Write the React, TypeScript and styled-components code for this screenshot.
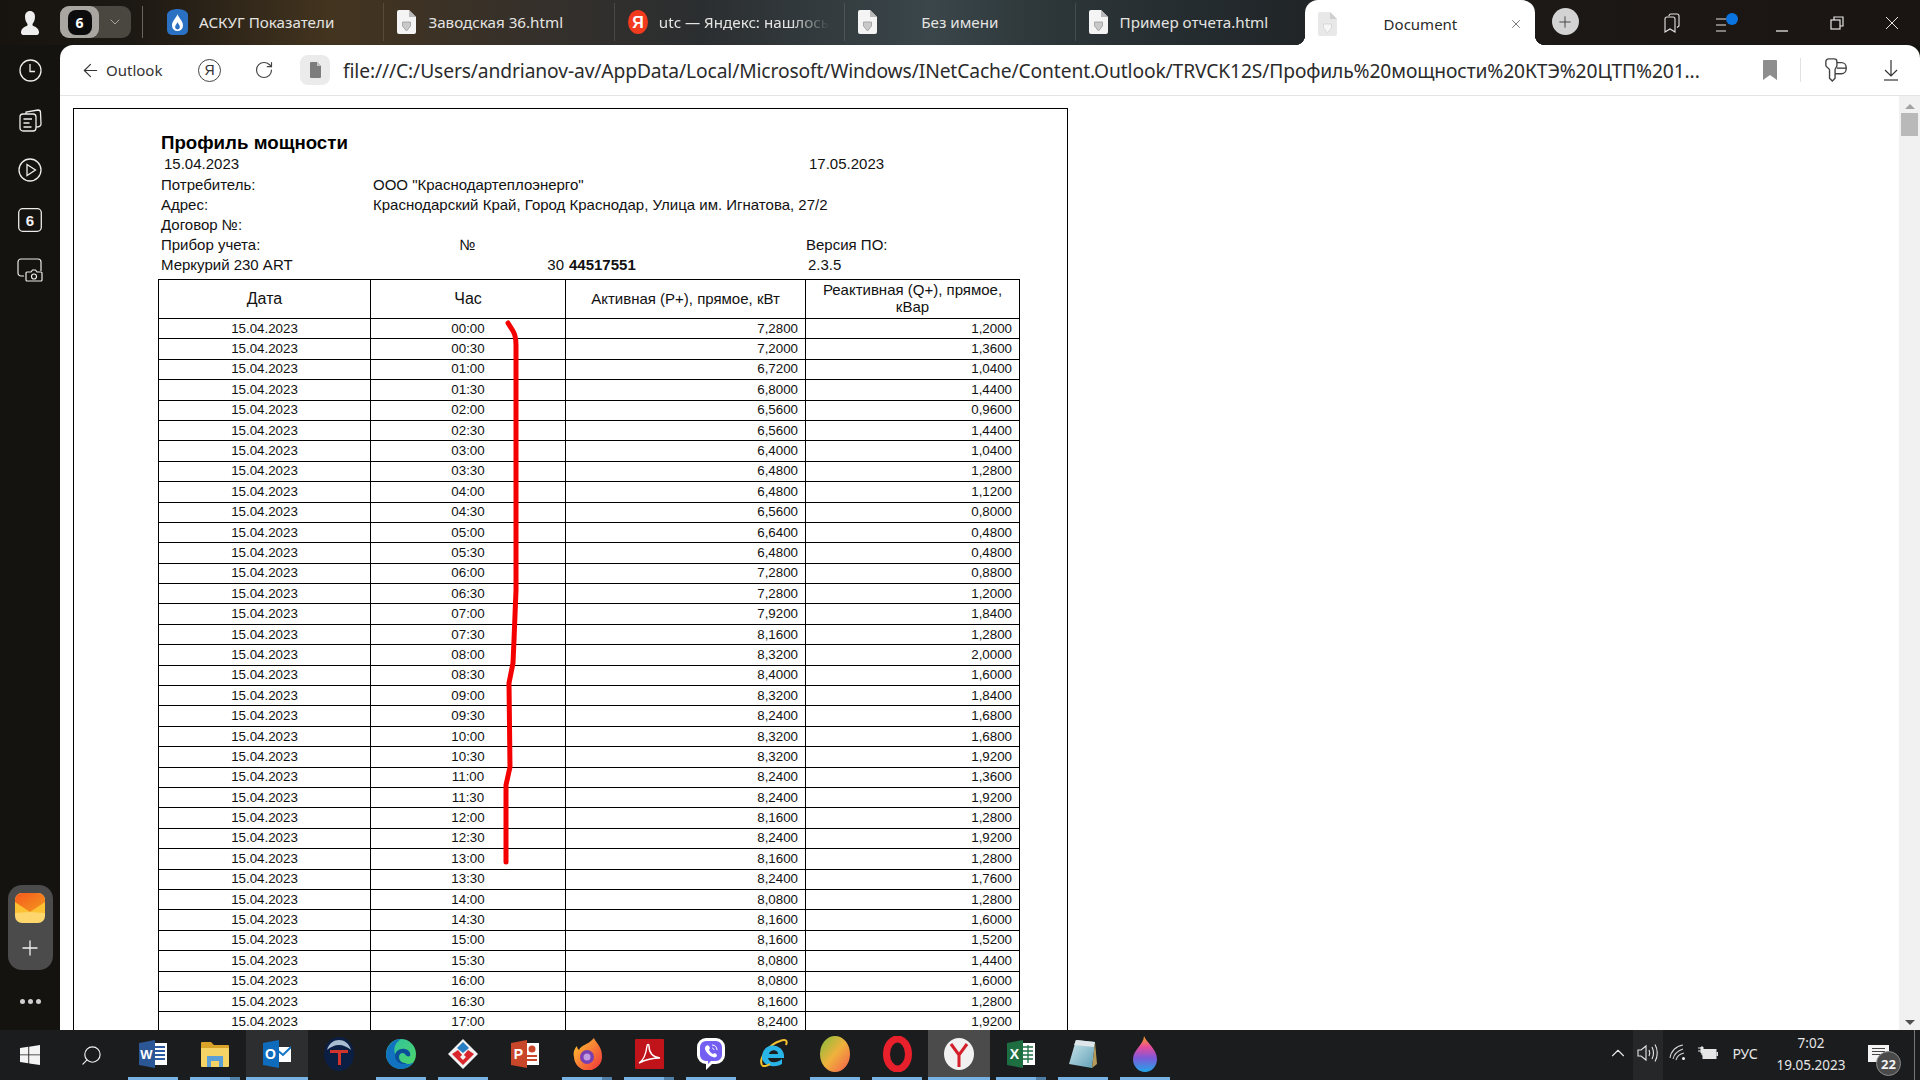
import React from "react";
import styled, { createGlobalStyle } from "styled-components";
import { ArrowLeft, RotateCw, Plus, X, ChevronDown, ChevronUp, Search } from "lucide-react";

const GlobalStyle = createGlobalStyle`
  html, body {
    margin: 0;
    padding: 0;
    overflow: hidden;
    background: #14130f;
  }
  * { box-sizing: border-box; }
`;

const uiFont = `"Noto Sans", "Open Sans", sans-serif`;
const docFont = `"Liberation Sans", Arial, sans-serif`;

const readings = [
  ["00:00", "7,2800", "1,2000"], ["00:30", "7,2000", "1,3600"], ["01:00", "6,7200", "1,0400"],
  ["01:30", "6,8000", "1,4400"], ["02:00", "6,5600", "0,9600"], ["02:30", "6,5600", "1,4400"],
  ["03:00", "6,4000", "1,0400"], ["03:30", "6,4800", "1,2800"], ["04:00", "6,4800", "1,1200"],
  ["04:30", "6,5600", "0,8000"], ["05:00", "6,6400", "0,4800"], ["05:30", "6,4800", "0,4800"],
  ["06:00", "7,2800", "0,8800"], ["06:30", "7,2800", "1,2000"], ["07:00", "7,9200", "1,8400"],
  ["07:30", "8,1600", "1,2800"], ["08:00", "8,3200", "2,0000"], ["08:30", "8,4000", "1,6000"],
  ["09:00", "8,3200", "1,8400"], ["09:30", "8,2400", "1,6800"], ["10:00", "8,3200", "1,6800"],
  ["10:30", "8,3200", "1,9200"], ["11:00", "8,2400", "1,3600"], ["11:30", "8,2400", "1,9200"],
  ["12:00", "8,1600", "1,2800"], ["12:30", "8,2400", "1,9200"], ["13:00", "8,1600", "1,2800"],
  ["13:30", "8,2400", "1,7600"], ["14:00", "8,0800", "1,2800"], ["14:30", "8,1600", "1,6000"],
  ["15:00", "8,1600", "1,5200"], ["15:30", "8,0800", "1,4400"], ["16:00", "8,0800", "1,6000"],
  ["16:30", "8,1600", "1,2800"], ["17:00", "8,2400", "1,9200"],
];

const Screen = styled.div`
  width: 1920px;
  height: 1080px;
  display: flex;
  flex-direction: column;
  overflow: hidden;
  background: #14130f;
`;

/* tab strip */
const TabStrip = styled.div`
  height: 45px;
  flex: none;
  display: flex;
  align-items: stretch;
  background: linear-gradient(90deg, #171410 0, #1c1813 130px, #43341f 330px, #36302a 520px, #2b2e30 700px, #3a464a 930px, #2c3538 1060px, #22282b 1250px, #1c1815 1560px, #1a1512 1920px);
`;

const UserSlot = styled.div`
  width: 60px;
  display: flex;
  align-items: center;
  justify-content: center;
`;

const GroupPill = styled.div`
  width: 71px;
  height: 32px;
  margin-top: 6px;
  display: flex;
  border-radius: 9px;
  background: #4a4741;
  color: #a9a6a0;
`;

const GroupCount = styled.div`
  width: 39px;
  display: flex;
  align-items: center;
  justify-content: center;
  border-radius: 9px;
  background: #a9a6a1;
`;

const CountTag = styled.span`
  width: 24px;
  height: 25px;
  display: flex;
  align-items: center;
  justify-content: center;
  border-radius: 8px;
  background: #0c0c0c;
  color: #fff;
  font: 700 14px ${uiFont};
`;

const GroupArrow = styled.div`
  flex: 1;
  display: flex;
  align-items: center;
  justify-content: center;
`;

const StripDivider = styled.div`
  width: 1px;
  height: 32px;
  margin: 6px 10px 0 11px;
  background: #6a665e;
`;

const Tab = styled.div<{ $first?: boolean }>`
  width: 230.4px;
  height: 38px;
  margin-top: 3px;
  padding-left: 13px;
  display: flex;
  align-items: center;
  gap: 11px;
  border-left: 1px solid ${(p) => (p.$first ? "transparent" : "rgba(255, 255, 255, 0.12)")};
`;

const TabTitle = styled.span<{ $center?: boolean; $fade?: boolean }>`
  flex: 1;
  min-width: 0;
  white-space: nowrap;
  padding-right: ${(p) => (p.$center ? "44px" : "0")};
  color: #e4e4e2;
  font: 15.2px ${uiFont};
  text-align: ${(p) => (p.$center ? "center" : "left")};
  ${(p) => p.$fade && "mask-image: linear-gradient(90deg, #000 72%, transparent 92%);"}
`;

const ActiveTab = styled.div`
  position: relative;
  width: 230px;
  padding: 2px 12px 0 13px;
  display: flex;
  align-items: center;
  border-radius: 13px 13px 0 0;
  background: #fff;
  &::before,
  &::after {
    content: "";
    position: absolute;
    bottom: 0;
    width: 10px;
    height: 10px;
  }
  &::before {
    left: -10px;
    background: radial-gradient(circle at 0 0, transparent 10px, #fff 10.5px);
  }
  &::after {
    right: -10px;
    background: radial-gradient(circle at 100% 0, transparent 10px, #fff 10.5px);
  }
`;

const ActiveTitle = styled.span`
  flex: 1;
  padding-right: 6px;
  color: #2a2a2a;
  font: 15px ${uiFont};
  text-align: center;
`;

const NewTab = styled.div`
  width: 27px;
  height: 27px;
  margin: 8px 0 0 17px;
  display: flex;
  align-items: center;
  justify-content: center;
  border-radius: 50%;
  background: #d3d3d3;
  color: #3a3a3a;
`;

const WindowControls = styled.div`
  margin-left: auto;
  padding-right: 1px;
  display: flex;
`;

const ControlSlot = styled.div`
  width: 55px;
  padding-top: 1px;
  display: flex;
  align-items: center;
  justify-content: center;
  color: #e6e6e6;
`;

/* body */
const Body = styled.div`
  flex: 1;
  min-height: 0;
  display: flex;
`;

const SideRail = styled.aside`
  width: 60px;
  flex: none;
  display: flex;
  flex-direction: column;
  align-items: center;
  background: #14130f;
`;

const RailButton = styled.div`
  width: 50px;
  height: 50px;
  display: flex;
  align-items: center;
  justify-content: center;
  color: #e8e8e8;
`;

const AppDock = styled.div`
  margin-top: auto;
  width: 45px;
  height: 85px;
  padding-top: 8px;
  display: flex;
  flex-direction: column;
  align-items: center;
  gap: 13px;
  border-radius: 14px;
  background: #4b4b4b;
  color: #f2f2f2;
`;

const MoreDots = styled.div`
  height: 32px;
  margin: 15px 0 13px;
  display: flex;
  align-items: center;
  gap: 3px;
`;

const MoreDot = styled.span`
  width: 5px;
  height: 5px;
  border-radius: 50%;
  background: #cfcfcf;
`;

const Main = styled.main`
  flex: 1;
  min-width: 0;
  display: flex;
  flex-direction: column;
  background: #fff;
  border-radius: 13px 13px 0 0;
`;

const AddressBar = styled.div`
  height: 51px;
  flex: none;
  padding-left: 20px;
  display: flex;
  align-items: center;
  border-bottom: 1px solid #e4e4e4;
  color: #444;
`;

const BackLink = styled.div`
  width: 118px;
  display: flex;
  align-items: center;
  gap: 5px;
  color: #333;
  font: 15px ${uiFont};
`;

const YaBadge = styled.div`
  width: 23px;
  height: 23px;
  display: flex;
  align-items: center;
  justify-content: center;
  border: 1.5px solid #444;
  border-radius: 50%;
  color: #333;
  font: 14px ${docFont};
`;

const ReloadSlot = styled.div`
  width: 20px;
  margin-left: 33px;
  display: flex;
  justify-content: center;
`;

const FilePill = styled.div`
  width: 30px;
  height: 30px;
  margin-left: 26px;
  display: flex;
  align-items: center;
  justify-content: center;
  border-radius: 8px;
  background: #ebebeb;
`;

const UrlText = styled.div`
  width: 1360px;
  margin-left: 13px;
  white-space: nowrap;
  color: #2b2b2b;
  font: 19.24px ${uiFont};
  letter-spacing: -0.12px;
`;

const BarActions = styled.div`
  margin-left: auto;
  padding-right: 2px;
  display: flex;
  align-items: center;
`;

const BarSlot = styled.div`
  width: 55px;
  display: flex;
  justify-content: center;
`;

const BarDivider = styled.div`
  width: 1px;
  height: 24px;
  margin-left: 3px;
  margin-right: 7px;
  background: #e2e2e2;
`;

const ViewerRow = styled.div`
  flex: 1;
  min-height: 0;
  display: flex;
`;

const Viewer = styled.div`
  flex: 1;
  min-width: 0;
  overflow: hidden;
  padding: 12px 0 0 13px;
`;

/* document */
const Sheet = styled.div`
  width: 995px;
  min-height: 1200px;
  padding: 23px 0 0 84px;
  border: 1px solid #000;
  color: #111;
  font: 15px ${docFont};
`;

const SheetTitle = styled.h1`
  height: 22px;
  margin: 0 0 0 3px;
  font: 700 18.7px/22px ${docFont};
  color: #000;
`;

const InfoRow = styled.div`
  height: 20px;
  display: grid;
  grid-template-columns: 212px 195px 240px 213px;
  align-items: center;
  line-height: 20px;
`;

const PeriodRow = styled(InfoRow)`
  margin-bottom: 1px;
`;

const InfoCell = styled.div<{ $pad?: number; $span?: number; $align?: string; $bold?: boolean }>`
  padding-left: ${(p) => p.$pad ?? 0}px;
  padding-right: ${(p) => (p.$align === "right" ? "1px" : "0")};
  grid-column: span ${(p) => p.$span ?? 1};
  text-align: ${(p) => p.$align ?? "left"};
  font-weight: ${(p) => (p.$bold ? 700 : 400)};
  white-space: nowrap;
`;

const TableWrap = styled.div`
  position: relative;
  width: 861px;
  margin-top: 4px;
`;

const PowerTable = styled.table`
  width: 861px;
  table-layout: fixed;
  border-collapse: collapse;
  font: 13.33px ${docFont};
`;

const HeadCell = styled.th<{ $big?: boolean }>`
  height: 39px;
  padding: 0 8px 2px;
  border: 1px solid #000;
  font-weight: 400;
  font-size: ${(p) => (p.$big ? "16px" : "15px")};
  line-height: 17px;
  color: #111;
  text-align: center;
`;

const DataRow = styled.tr`
  height: 20.4px;
`;

const DataCell = styled.td<{ $num?: boolean }>`
  padding: 0 ${(p) => (p.$num ? "7px" : "0")} 0 0;
  border: 1px solid #000;
  line-height: 16px;
  text-align: ${(p) => (p.$num ? "right" : "center")};
`;

const MarkerStroke = styled.svg`
  position: absolute;
  left: 340px;
  top: 40px;
  overflow: visible;
  pointer-events: none;
`;

const Scrollbar = styled.div`
  width: 21px;
  flex: none;
  padding: 8px 2px 5px;
  display: flex;
  flex-direction: column;
  align-items: center;
  background: #f1f1f1;
`;

const ArrowUp = styled.span`
  border-left: 5px solid transparent;
  border-right: 5px solid transparent;
  border-bottom: 5px solid #a3a3a3;
`;

const ArrowDownMark = styled.span`
  margin-top: auto;
  border-left: 5px solid transparent;
  border-right: 5px solid transparent;
  border-top: 5px solid #505050;
`;

const Thumb = styled.div`
  width: 17px;
  height: 23px;
  margin-top: 4px;
  background: #b9b9b9;
`;

/* taskbar */
const Taskbar = styled.footer`
  height: 50px;
  flex: none;
  display: flex;
  background: #1b1c1e;
`;

const StartButton = styled.div`
  width: 60px;
  display: flex;
  align-items: center;
  justify-content: center;
`;

const SearchButton = styled.div`
  width: 62px;
  display: flex;
  align-items: center;
  justify-content: center;
  color: #f2f2f2;
`;

const MirroredSearch = styled(Search)`
  transform: scaleX(-1);
`;

const TaskButton = styled.div<{ $state?: "current" | "focus"; $open?: boolean; $stack?: boolean }>`
  position: relative;
  width: 62px;
  display: flex;
  align-items: center;
  justify-content: center;
  padding-bottom: 2px;
  background: ${(p) => (p.$state === "focus" ? "#4b4b4c" : p.$state === "current" ? "#2d2e30" : "transparent")};
  &::after {
    content: "";
    display: ${(p) => (p.$open || p.$state ? "block" : "none")};
    position: absolute;
    left: ${(p) => (p.$state ? "0" : "6px")};
    right: ${(p) => (p.$state ? "0" : "6px")};
    bottom: 0;
    height: 3px;
    background: ${(p) => (p.$stack ? "linear-gradient(90deg, #76b2e4 80%, #4f7ea6 80%)" : "#76b2e4")};
  }
`;

const Tray = styled.div`
  margin-left: auto;
  display: flex;
  color: #e6e6e6;
`;

const TrayButton = styled.div<{ $hover?: boolean }>`
  width: 30px;
  padding-bottom: 4px;
  display: flex;
  align-items: center;
  justify-content: center;
  background: ${(p) => (p.$hover ? "#262728" : "transparent")};
`;

const LangLabel = styled.div`
  width: 44px;
  padding-bottom: 4px;
  display: flex;
  align-items: center;
  justify-content: center;
  font: 14px ${uiFont};
`;

const ClockBlock = styled.div`
  width: 88px;
  display: flex;
  flex-direction: column;
  align-items: center;
  justify-content: center;
  gap: 4px;
  padding-bottom: 2px;
  font: 13.5px/18px ${uiFont};
`;

const NotifySlot = styled.div`
  width: 59px;
  padding: 15px 0 0 13px;
`;

const NotifyBubble = styled.div`
  position: relative;
  width: 21px;
  height: 17px;
  padding: 3px 4px;
  display: flex;
  flex-direction: column;
  gap: 2px;
  background: #f4f4f4;
`;

const NotifyLine = styled.span`
  height: 1px;
  background: #444;
`;

const NotifyBadge = styled.span`
  position: absolute;
  left: 8px;
  top: 6px;
  width: 25px;
  height: 25px;
  display: flex;
  align-items: center;
  justify-content: center;
  border: 1px solid #8a8a8a;
  border-radius: 50%;
  background: #4a4a4a;
  color: #f2f2f2;
  font: 700 13px ${uiFont};
`;

const DesktopEdge = styled.div`
  width: 6px;
  flex: none;
  border-left: 1px solid #777;
`;

/* drawings */
const UserIcon = () => (
  <svg width="18" height="24" viewBox="0 0 18 24" fill="#eee">
    <path d="M9 0c3.200 0 5 2.300 5 5.600 0 3.200-1 5.600-2.300 7.200-.5.8-.2 1.800.6 2.200 2.600 1 5.200 2.400 5.700 5.800.2 1.800-.6 3.200-2 3.200H2c-1.400 0-2.200-1.400-2-3.200.5-3.400 3.100-4.800 5.700-5.800.8-.4 1.100-1.400.6-2.200C5 11.200 4 8.800 4 5.600 4 2.300 5.800 0 9 0z" />
  </svg>
);

const DocIcon = ({ pale }: { pale?: boolean }) => (
  <svg width="20" height="24" viewBox="0 0 20 24">
    <path d="M2 0h10l7 7v15a2 2 0 0 1-2 2H2a2 2 0 0 1-2-2V2a2 2 0 0 1 2-2z" fill={pale ? "#e8e8e8" : "#f4f4f4"} />
    <path d="M12 0l7 7h-7z" fill={pale ? "#cfcfcf" : "#b9b9b9"} />
    <path d="M5.500 12h8v4l-4 5-4-5z" fill={pale ? "#f6f6f6" : "#c9c9c9"} stroke={pale ? "#d2d2d2" : "#9a9a9a"} strokeWidth=".8" />
  </svg>
);

const GasIcon = () => (
  <svg width="21" height="26" viewBox="0 0 21 26">
    <path d="M10.500 0C15 0 21 2 21 6v15a5 5 0 0 1-5 5H5a5 5 0 0 1-5-5V6c0-4 6-6 10.500-6z" fill="#2a71c4" />
    <path d="M10.500 5c1 4 5.500 6.500 5.500 11.500a5.500 5.500 0 0 1-11 0C5 11.500 9.500 9 10.500 5z" fill="#fff" />
    <path d="M10.500 13c.5 2 2.400 3 2.400 5a2.400 2.400 0 0 1-4.800 0c0-2 1.900-3 2.400-5z" fill="#2a71c4" />
  </svg>
);

const YandexRedIcon = () => (
  <svg width="20" height="24" viewBox="0 0 20 24">
    <ellipse cx="10" cy="12" rx="10" ry="12" fill="#f23a1e" />
    <text x="10" y="17.500" textAnchor="middle" fontSize="16" fontWeight="700" fontFamily="Liberation Sans" fill="#fff">Я</text>
  </svg>
);

const TabsPanelIcon = () => (
  <svg width="16" height="20" viewBox="0 0 16 20" fill="none" stroke="#e6e6e6" strokeWidth="1.100">
    <path d="M5 3V2.500A2 2 0 0 1 7 1h6a2 2 0 0 1 2 2v10l-2 1.500" />
    <path d="M1 6a2 2 0 0 1 2-2h6a2 2 0 0 1 2 2v13l-5-3-5 3z" />
  </svg>
);

const MenuDotIcon = () => (
  <svg width="24" height="20" viewBox="0 0 24 20">
    <path d="M1 6h10M1 12h10M1 18h10" stroke="#e6e6e6" strokeWidth="1.200" />
    <circle cx="17" cy="6" r="6" fill="#0a74e0" />
  </svg>
);

const MinimizeIcon = () => (
  <svg width="14" height="20" viewBox="0 0 14 20">
    <path d="M1 18h12" stroke="#e6e6e6" strokeWidth="1.300" />
  </svg>
);

const RestoreIcon = () => (
  <svg width="14" height="14" viewBox="0 0 14 14" fill="none" stroke="#e6e6e6" strokeWidth="1.200">
    <rect x="1" y="4" width="9" height="9" />
    <path d="M4 4V1h9v9h-3" />
  </svg>
);

const CloseGlyph = () => (
  <svg width="14" height="14" viewBox="0 0 14 14">
    <path d="M1 1l12 12M13 1L1 13" stroke="#e6e6e6" strokeWidth="1" />
  </svg>
);

const ReaderIcon = () => (
  <svg width="11" height="16" viewBox="0 0 11 16">
    <path d="M1 0h6l4 4v11a1 1 0 0 1-1 1H1a1 1 0 0 1-1-1V1a1 1 0 0 1 1-1z" fill="#7d7d7d" />
    <path d="M7 0l4 4H7z" fill="#c6c6c6" />
  </svg>
);

const BookmarkIcon = () => (
  <svg width="14" height="20" viewBox="0 0 14 20">
    <path d="M1 0h12a1 1 0 0 1 1 1v19l-7-5-7 5V1a1 1 0 0 1 1-1z" fill="#8e8e8e" />
  </svg>
);

const KeyIcon = () => (
  <svg width="24" height="24" viewBox="0 0 26 26" fill="none" stroke="#444" strokeWidth="1.500">
    <path d="M2 4a3 3 0 0 1 3-3h6a3 3 0 0 1 3 3v4c0 2-2 3-2 5v9l-3 3-3-3v-9c0-2-4-3-4-5z" />
    <path d="M14 5h5a5 5 0 0 1 5 5v2a5 5 0 0 1-5 5h-7" />
    <path d="M14 11h10" />
  </svg>
);

const DownloadIcon = () => (
  <svg width="16" height="22" viewBox="0 0 16 22" fill="none" stroke="#333" strokeWidth="1.200">
    <path d="M8 1v16M2 11l6 6 6-6" />
    <path d="M1 21h14" />
  </svg>
);

const ClockIcon = () => (
  <svg width="23" height="23" viewBox="0 0 23 23" fill="none" stroke="#ececec" strokeWidth="1.300">
    <circle cx="11.500" cy="11.500" r="10.500" />
    <path d="M11 5v7.500h5" />
  </svg>
);

const CardsIcon = () => (
  <svg width="23" height="23" viewBox="0 0 23 23" fill="none" stroke="#ececec" strokeWidth="1.300">
    <rect x="1" y="5" width="16" height="17" rx="3" />
    <path d="M7 5V3l12-2c1.500 0 2.500 1 2.500 2.500L22 15c0 2-1.500 3-5 3" />
    <path d="M4.500 10H13M4.500 14h6M4.500 18h8" />
  </svg>
);

const PlayIcon = () => (
  <svg width="24" height="24" viewBox="0 0 24 24" fill="none" stroke="#ececec" strokeWidth="1.300">
    <circle cx="12" cy="12" r="11" />
    <path d="M9 6.500l8.500 5.500L9 17.500z" />
  </svg>
);

const CounterIcon = () => (
  <svg width="24" height="24" viewBox="0 0 24 24">
    <rect x=".7" y=".7" width="22.600" height="22.600" rx="4" fill="none" stroke="#ececec" strokeWidth="1.300" />
    <text x="12" y="18" textAnchor="middle" fontSize="15" fontWeight="700" fontFamily="Liberation Sans" fill="#f2f2f2">6</text>
  </svg>
);

const ScreenshotIcon = () => (
  <svg width="26" height="24" viewBox="0 0 26 24" fill="none" stroke="#ececec" strokeWidth="1.200">
    <path d="M7 18H4a3 3 0 0 1-3-3V4a3 3 0 0 1 3-3h17a3 3 0 0 1 3 3v9" />
    <path d="M10 14h4l1.500-2h3l1.500 2h4a1 1 0 0 1 1 1v7a1 1 0 0 1-1 1H10a1 1 0 0 1-1-1v-7a1 1 0 0 1 1-1z" />
    <circle cx="17" cy="18.500" r="2.500" />
  </svg>
);

const MailIcon = () => (
  <svg width="30" height="30" viewBox="0 0 30 30">
    <defs>
      <linearGradient id="mailTop" x1="0" y1="0" x2="1" y2="1">
        <stop offset="0" stopColor="#f8581c" />
        <stop offset="1" stopColor="#f29a1f" />
      </linearGradient>
    </defs>
    <rect width="30" height="30" rx="7" fill="#fdd76d" />
    <path d="M0 8l15 11L30 8v12L15 19 0 20z" fill="#fcc233" />
    <path d="M7 0h16a7 7 0 0 1 7 7v2L15 19 0 9V7a7 7 0 0 1 7-7z" fill="url(#mailTop)" />
  </svg>
);

const WindowsLogo = () => (
  <svg width="20" height="20" viewBox="0 0 20 20" fill="#f4f4f4">
    <path d="M0 3l8.300-1.200v7.600H0zM9.200 1.700L20 0v9.400H9.200zM0 10.300h8.300v7.900L0 17zM9.200 10.300H20V20L9.200 18.400z" />
  </svg>
);

const Letter = ({ x, y, size, children }: { x: number; y: number; size: number; children: string }) => (
  <text x={x} y={y} fontSize={size} fontWeight="700" fontFamily="Liberation Sans" textAnchor="middle" fill="#fff">
    {children}
  </text>
);

const WordLogo = () => (
  <svg width="28" height="28" viewBox="0 0 28 28">
    <rect x="12" y="3" width="16" height="22" fill="#fff" />
    <path d="M15 7h11M15 11h11M15 15h11M15 19h11" stroke="#2b5aa0" strokeWidth="1.800" />
    <path d="M0 3l16-3v28L0 25z" fill="#2b5797" />
    <Letter x={7.500} y={19} size={13}>W</Letter>
  </svg>
);

const FolderLogo = () => (
  <svg width="28" height="28" viewBox="0 0 28 28">
    <path d="M0 3a1 1 0 0 1 1-1h9l3 3h14a1 1 0 0 1 1 1v6H0z" fill="#d9a32a" />
    <path d="M0 8h27a1 1 0 0 1 1 1v17a1 1 0 0 1-1 1H1a1 1 0 0 1-1-1z" fill="#f6d365" />
    <rect x="6" y="16" width="16" height="11" fill="#5b9fd6" />
    <rect x="10" y="21" width="8" height="6" fill="#f6d365" />
  </svg>
);

const OutlookLogo = () => (
  <svg width="28" height="28" viewBox="0 0 28 28">
    <rect x="13" y="7" width="15" height="15" fill="#fff" />
    <path d="M13 9l7 6 8-8" fill="none" stroke="#1274c4" strokeWidth="2" />
    <path d="M0 3l16-3v28L0 25z" fill="#0f6cbd" />
    <Letter x={7.500} y={19} size={14}>O</Letter>
  </svg>
);

const TechLogo = () => (
  <svg width="30" height="34" viewBox="0 0 30 34">
    <ellipse cx="15" cy="17" rx="15" ry="17" fill="#0b1f45" />
    <path d="M3 13c2-7 7-10 12-10s10 3 12 10c-3-3-8-5-12-5S6 10 3 13z" fill="#a9bdd2" />
    <path d="M6 13h18v3H17v12h-3V16H6z" fill="#d0342c" />
  </svg>
);

const EdgeLogo = () => (
  <svg width="30" height="30" viewBox="0 0 30 30">
    <defs>
      <linearGradient id="edgeRim" x1="0" y1="0" x2="1" y2="1">
        <stop offset="0" stopColor="#2fc1a4" />
        <stop offset="1" stopColor="#4fd664" />
      </linearGradient>
    </defs>
    <circle cx="15" cy="15" r="15" fill="url(#edgeRim)" />
    <path d="M0 15C1 6 8 0 15 0c-5 3-8 8-6 15 2 8 11 13 19 8-3 4-8 7-13 7C6 30 0 23 0 15z" fill="#1173c0" />
    <path d="M9 17c0-5 5-8 10-7 4 1 6 4 5 7-2 1-4 0-5-2-2-2-6-1-6 3 0 4 4 7 9 6-6 3-13-1-13-7z" fill="#0b4f9a" />
  </svg>
);

const DiamondLogo = () => (
  <svg width="30" height="30" viewBox="0 0 30 30">
    <path d="M15 0l15 15-15 15L0 15z" fill="#f2f2f2" />
    <path d="M15 3l6 6-6 5-6-5z" fill="#2a7fc4" />
    <path d="M4 15l6-4 5 6 5-6 6 4-11 11z" fill="#d8262c" />
    <path d="M15 15l3 3-3 3-3-3z" fill="#f2f2f2" />
  </svg>
);

const PowerPointLogo = () => (
  <svg width="28" height="28" viewBox="0 0 28 28">
    <rect x="13" y="3" width="15" height="22" fill="#fff" />
    <circle cx="21" cy="9" r="3.500" fill="#c8472a" />
    <path d="M16 16h10M16 20h10" stroke="#c8472a" strokeWidth="1.800" />
    <path d="M0 3l16-3v28L0 25z" fill="#c8472a" />
    <Letter x={7.500} y={19} size={14}>P</Letter>
  </svg>
);

const FirefoxLogo = () => (
  <svg width="30" height="32" viewBox="0 0 30 32">
    <defs>
      <linearGradient id="foxBody" x1="0" y1="0" x2="1" y2="1">
        <stop offset="0" stopColor="#ffcb2e" />
        <stop offset="1" stopColor="#f0303c" />
      </linearGradient>
    </defs>
    <path d="M22 0c1 4 8 8 8 18a14 14 0 0 1-28 1C1 15 2 11 5 8c0 2 1 3 2 4 2-5 9-5 15-12z" fill="url(#foxBody)" />
    <circle cx="15" cy="19" r="7" fill="#7a3fb0" />
    <circle cx="15" cy="19" r="3.500" fill="#c09be0" />
  </svg>
);

const AcrobatLogo = () => (
  <svg width="29" height="30" viewBox="0 0 29 30">
    <rect width="29" height="30" rx="1" fill="#c1141a" />
    <path d="M4 24c5-3 7-9 8-17 .2-2 2-2 2 0 0 7 4 11 11 12-7 0-13 1-21 5z" fill="none" stroke="#fff" strokeWidth="1.400" />
  </svg>
);

const ViberLogo = () => (
  <svg width="28" height="32" viewBox="0 0 28 32">
    <path d="M9 0h10a9 9 0 0 1 9 9v8a9 9 0 0 1-9 9h-4l-6 6v-6a9 9 0 0 1-9-9V9a9 9 0 0 1 9-9z" fill="#fff" />
    <path d="M9 3h10a6 6 0 0 1 6 6v8a6 6 0 0 1-6 6h-5l-3 3v-3H9a6 6 0 0 1-6-6V9a6 6 0 0 1 6-6z" fill="#7360f2" />
    <path d="M9 8c1-1 2-1 3 0l1 2-1 2c1 2 2 3 4 4l2-1 2 2c0 2-2 3-4 2-4-1-7-5-8-8 0-1 0-2 1-3z" fill="#fff" />
    <path d="M15 7c3 0 5 2 5 5M15 10c1 0 2 1 2 2" fill="none" stroke="#fff" strokeWidth="1" />
  </svg>
);

const ExplorerLogo = () => (
  <svg width="30" height="32" viewBox="0 0 30 32">
    <path d="M4 27C0 20 12 6 22 3c5-2 8-1 6 4" fill="none" stroke="#f2c230" strokeWidth="2" />
    <path d="M4 19a11 11 0 0 1 22-1v2H10c1 5 8 6 14 1v5c-9 5-20 1-20-7zm7-3h9c0-5-8-5-9 0z" fill="#2ab5e8" />
    <path d="M4 27c1 2 5 1 8-1" fill="none" stroke="#f2c230" strokeWidth="2" />
  </svg>
);

const GradientLogo = () => (
  <svg width="30" height="36" viewBox="0 0 30 36">
    <defs>
      <linearGradient id="softOrb" x1="0" y1="0" x2="1" y2="1">
        <stop offset="0" stopColor="#7fbe3c" />
        <stop offset=".5" stopColor="#f0b13c" />
        <stop offset="1" stopColor="#f45c4c" />
      </linearGradient>
    </defs>
    <ellipse cx="15" cy="18" rx="15" ry="18" fill="url(#softOrb)" />
  </svg>
);

const OperaLogo = () => (
  <svg width="29" height="36" viewBox="0 0 29 36">
    <ellipse cx="14.500" cy="18" rx="11" ry="15" fill="none" stroke="#e8202c" strokeWidth="7" />
  </svg>
);

const YandexLogo = () => (
  <svg width="30" height="32" viewBox="0 0 30 32">
    <ellipse cx="15" cy="16" rx="15" ry="16" fill="#f1f1f1" />
    <path d="M7 6l8 11 8-11M15 17v12" fill="none" stroke="#d4202a" strokeWidth="3" />
  </svg>
);

const ExcelLogo = () => (
  <svg width="28" height="28" viewBox="0 0 28 28">
    <rect x="13" y="3" width="15" height="22" fill="#fff" />
    <path d="M16 7h10M16 11h10M16 15h10M16 19h10M21 5v18" stroke="#1d7044" strokeWidth="1.300" />
    <path d="M0 3l16-3v28L0 25z" fill="#1d6f42" />
    <Letter x={7.500} y={19} size={14}>X</Letter>
  </svg>
);

const NotepadLogo = () => (
  <svg width="28" height="32" viewBox="0 0 28 32">
    <defs>
      <linearGradient id="padSheet" x1="0" y1="0" x2="1" y2="1">
        <stop offset="0" stopColor="#cfe8ee" />
        <stop offset="1" stopColor="#5f9fb5" />
      </linearGradient>
    </defs>
    <path d="M7 2l19 2-3 26-23-4z" fill="url(#padSheet)" />
    <path d="M7 2l19 2-1 5-20-2z" fill="#dfe6ea" />
    <path d="M26 4l2 22-5 4z" fill="#b59a5a" />
  </svg>
);

const DropLogo = () => (
  <svg width="24" height="36" viewBox="0 0 24 36">
    <defs>
      <linearGradient id="paintDrop" x1="0" y1="0" x2="0" y2="1">
        <stop offset="0" stopColor="#f7a41d" />
        <stop offset=".3" stopColor="#e84c9a" />
        <stop offset=".6" stopColor="#8058d8" />
        <stop offset="1" stopColor="#21a6e8" />
      </linearGradient>
    </defs>
    <path d="M11 0c2 6 13 13 13 23a12 13 0 0 1-24 0C0 14 11 8 11 0z" fill="url(#paintDrop)" />
  </svg>
);

const SpeakerIcon = () => (
  <svg width="22" height="20" viewBox="0 0 22 20" fill="none" stroke="#e6e6e6" strokeWidth="1.100">
    <path d="M1 7h3l5-4v14l-5-4H1z" />
    <path d="M12 7c1 2 1 4 0 6M15 4c2 4 2 8 0 12M18 1.500c3 5 3 12 0 17" />
  </svg>
);

const WifiIcon = () => (
  <svg width="18" height="18" viewBox="0 0 18 18" fill="none" stroke="#cfcfcf" strokeWidth="1.100">
    <path d="M1 14C2 7 7 2 14 1M4 15c1-5 4-8 10-10M7 16c1-4 3-6 8-7" />
    <circle cx="14.500" cy="14.500" r="1.500" fill="#f2f2f2" stroke="none" />
  </svg>
);

const BatteryIcon = () => (
  <svg width="20" height="14" viewBox="0 0 20 14">
    <path d="M0 2h3M0 5h3M3 1v6h2V1z" stroke="#e6e6e6" strokeWidth="1" fill="#e6e6e6" />
    <path d="M4 7v2h1" stroke="#e6e6e6" fill="none" />
    <rect x="5" y="3.500" width="13" height="9" fill="#e6e6e6" stroke="#e6e6e6" />
    <rect x="18.500" y="6" width="1.500" height="4" fill="#e6e6e6" />
  </svg>
);

const taskIcons: { key: string; icon: React.ReactNode; state?: "current" | "focus"; open?: boolean; stack?: boolean }[] = [
  { key: "word", icon: <WordLogo />, open: true },
  { key: "folder", icon: <FolderLogo />, open: true, stack: true },
  { key: "outlook", icon: <OutlookLogo />, state: "current" },
  { key: "tech", icon: <TechLogo /> },
  { key: "edge", icon: <EdgeLogo />, open: true },
  { key: "diamond", icon: <DiamondLogo />, open: true },
  { key: "ppt", icon: <PowerPointLogo /> },
  { key: "firefox", icon: <FirefoxLogo />, open: true, stack: true },
  { key: "acrobat", icon: <AcrobatLogo />, open: true, stack: true },
  { key: "viber", icon: <ViberLogo />, open: true },
  { key: "ie", icon: <ExplorerLogo /> },
  { key: "orb", icon: <GradientLogo />, open: true },
  { key: "opera", icon: <OperaLogo />, open: true },
  { key: "yandex", icon: <YandexLogo />, state: "focus" },
  { key: "excel", icon: <ExcelLogo />, open: true, stack: true },
  { key: "notepad", icon: <NotepadLogo />, open: true },
  { key: "drop", icon: <DropLogo />, open: true },
];

const App = () => {
  return (
    <Screen>
      <GlobalStyle />
      <TabStrip>
        <UserSlot>
          <UserIcon />
        </UserSlot>
        <GroupPill>
          <GroupCount>
            <CountTag>6</CountTag>
          </GroupCount>
          <GroupArrow>
            <ChevronDown size={16} strokeWidth={1.5} />
          </GroupArrow>
        </GroupPill>
        <StripDivider />
        <Tab $first>
          <GasIcon />
          <TabTitle>АСКУГ Показатели</TabTitle>
        </Tab>
        <Tab>
          <DocIcon />
          <TabTitle>Заводская 36.html</TabTitle>
        </Tab>
        <Tab>
          <YandexRedIcon />
          <TabTitle $fade>utc — Яндекс: нашлось</TabTitle>
        </Tab>
        <Tab>
          <DocIcon />
          <TabTitle $center>Без имени</TabTitle>
        </Tab>
        <Tab>
          <DocIcon />
          <TabTitle>Пример отчета.html</TabTitle>
        </Tab>
        <ActiveTab>
          <DocIcon pale />
          <ActiveTitle>Document</ActiveTitle>
          <X size={14} strokeWidth={1.2} color="#444" />
        </ActiveTab>
        <NewTab>
          <Plus size={18} strokeWidth={1.2} />
        </NewTab>
        <WindowControls>
          <ControlSlot>
            <TabsPanelIcon />
          </ControlSlot>
          <ControlSlot>
            <MenuDotIcon />
          </ControlSlot>
          <ControlSlot>
            <MinimizeIcon />
          </ControlSlot>
          <ControlSlot>
            <RestoreIcon />
          </ControlSlot>
          <ControlSlot>
            <CloseGlyph />
          </ControlSlot>
        </WindowControls>
      </TabStrip>
      <Body>
        <SideRail>
          <RailButton>
            <ClockIcon />
          </RailButton>
          <RailButton>
            <CardsIcon />
          </RailButton>
          <RailButton>
            <PlayIcon />
          </RailButton>
          <RailButton>
            <CounterIcon />
          </RailButton>
          <RailButton>
            <ScreenshotIcon />
          </RailButton>
          <AppDock>
            <MailIcon />
            <Plus size={24} strokeWidth={1.3} />
          </AppDock>
          <MoreDots>
            <MoreDot />
            <MoreDot />
            <MoreDot />
          </MoreDots>
        </SideRail>
        <Main>
          <AddressBar>
            <BackLink>
              <ArrowLeft size={21} strokeWidth={1.3} />
              Outlook
            </BackLink>
            <YaBadge>Я</YaBadge>
            <ReloadSlot>
              <RotateCw size={20} strokeWidth={1.4} />
            </ReloadSlot>
            <FilePill>
              <ReaderIcon />
            </FilePill>
            <UrlText>
              file:///C:/Users/andrianov-av/AppData/Local/Microsoft/Windows/INetCache/Content.Outlook/TRVCK12S/Профиль%20мощности%20КТЭ%20ЦТП%201...
            </UrlText>
            <BarActions>
              <BarSlot>
                <BookmarkIcon />
              </BarSlot>
              <BarDivider />
              <BarSlot>
                <KeyIcon />
              </BarSlot>
              <BarSlot>
                <DownloadIcon />
              </BarSlot>
            </BarActions>
          </AddressBar>
          <ViewerRow>
            <Viewer>
              <Sheet>
                <SheetTitle>Профиль мощности</SheetTitle>
                <PeriodRow>
                  <InfoCell $pad={6} $span={3}>15.04.2023</InfoCell>
                  <InfoCell $pad={4}>17.05.2023</InfoCell>
                </PeriodRow>
                <InfoRow>
                  <InfoCell $pad={3}>Потребитель:</InfoCell>
                  <InfoCell $pad={3} $span={3}>ООО "Краснодартеплоэнерго"</InfoCell>
                </InfoRow>
                <InfoRow>
                  <InfoCell $pad={3}>Адрес:</InfoCell>
                  <InfoCell $pad={3} $span={3}>Краснодарский Край, Город Краснодар, Улица им. Игнатова, 27/2</InfoCell>
                </InfoRow>
                <InfoRow>
                  <InfoCell $pad={3} $span={4}>Договор №:</InfoCell>
                </InfoRow>
                <InfoRow>
                  <InfoCell $pad={3}>Прибор учета:</InfoCell>
                  <InfoCell $align="center">№</InfoCell>
                  <InfoCell />
                  <InfoCell $pad={1}>Версия ПО:</InfoCell>
                </InfoRow>
                <InfoRow>
                  <InfoCell $pad={3}>Меркурий 230 ART</InfoCell>
                  <InfoCell $align="right">30</InfoCell>
                  <InfoCell $pad={4} $bold>44517551</InfoCell>
                  <InfoCell $pad={3}>2.3.5</InfoCell>
                </InfoRow>
                <TableWrap>
                  <PowerTable>
                    <colgroup>
                      <col width="212" />
                      <col width="195" />
                      <col width="240" />
                      <col width="214" />
                    </colgroup>
                    <thead>
                      <tr>
                        <HeadCell $big>Дата</HeadCell>
                        <HeadCell $big>Час</HeadCell>
                        <HeadCell>Активная (P+), прямое, кВт</HeadCell>
                        <HeadCell>Реактивная (Q+), прямое, кВар</HeadCell>
                      </tr>
                    </thead>
                    <tbody>
                      {readings.map(([hour, active, reactive]) => (
                        <DataRow key={hour}>
                          <DataCell>15.04.2023</DataCell>
                          <DataCell>{hour}</DataCell>
                          <DataCell $num>{active}</DataCell>
                          <DataCell $num>{reactive}</DataCell>
                        </DataRow>
                      ))}
                    </tbody>
                  </PowerTable>
                  <MarkerStroke width="30" height="550" viewBox="498 319 30 550">
                    <path
                      d="M508 323 L513 331 Q516 336 516 345 L516 590 L514 640 L513 663 L509 683 L510 767 L506 785 L506 862"
                      fill="none"
                      stroke="#f50000"
                      strokeWidth="5"
                      strokeLinecap="round"
                      strokeLinejoin="round"
                    />
                  </MarkerStroke>
                </TableWrap>
              </Sheet>
            </Viewer>
            <Scrollbar>
              <ArrowUp />
              <Thumb />
              <ArrowDownMark />
            </Scrollbar>
          </ViewerRow>
        </Main>
      </Body>
      <Taskbar>
        <StartButton>
          <WindowsLogo />
        </StartButton>
        <SearchButton>
          <MirroredSearch size={23} strokeWidth={1.2} />
        </SearchButton>
        {taskIcons.map((item) => (
          <TaskButton key={item.key} $state={item.state} $open={item.open} $stack={item.stack}>
            {item.icon}
          </TaskButton>
        ))}
        <Tray>
          <TrayButton>
            <ChevronUp size={22} strokeWidth={1.2} />
          </TrayButton>
          <TrayButton $hover>
            <SpeakerIcon />
          </TrayButton>
          <TrayButton>
            <WifiIcon />
          </TrayButton>
          <TrayButton>
            <BatteryIcon />
          </TrayButton>
          <LangLabel>РУС</LangLabel>
          <ClockBlock>
            <span>7:02</span>
            <span>19.05.2023</span>
          </ClockBlock>
          <NotifySlot>
            <NotifyBubble>
              <NotifyLine />
              <NotifyLine />
              <NotifyLine />
              <NotifyBadge>22</NotifyBadge>
            </NotifyBubble>
          </NotifySlot>
          <DesktopEdge />
        </Tray>
      </Taskbar>
    </Screen>
  );
};

export default App;
